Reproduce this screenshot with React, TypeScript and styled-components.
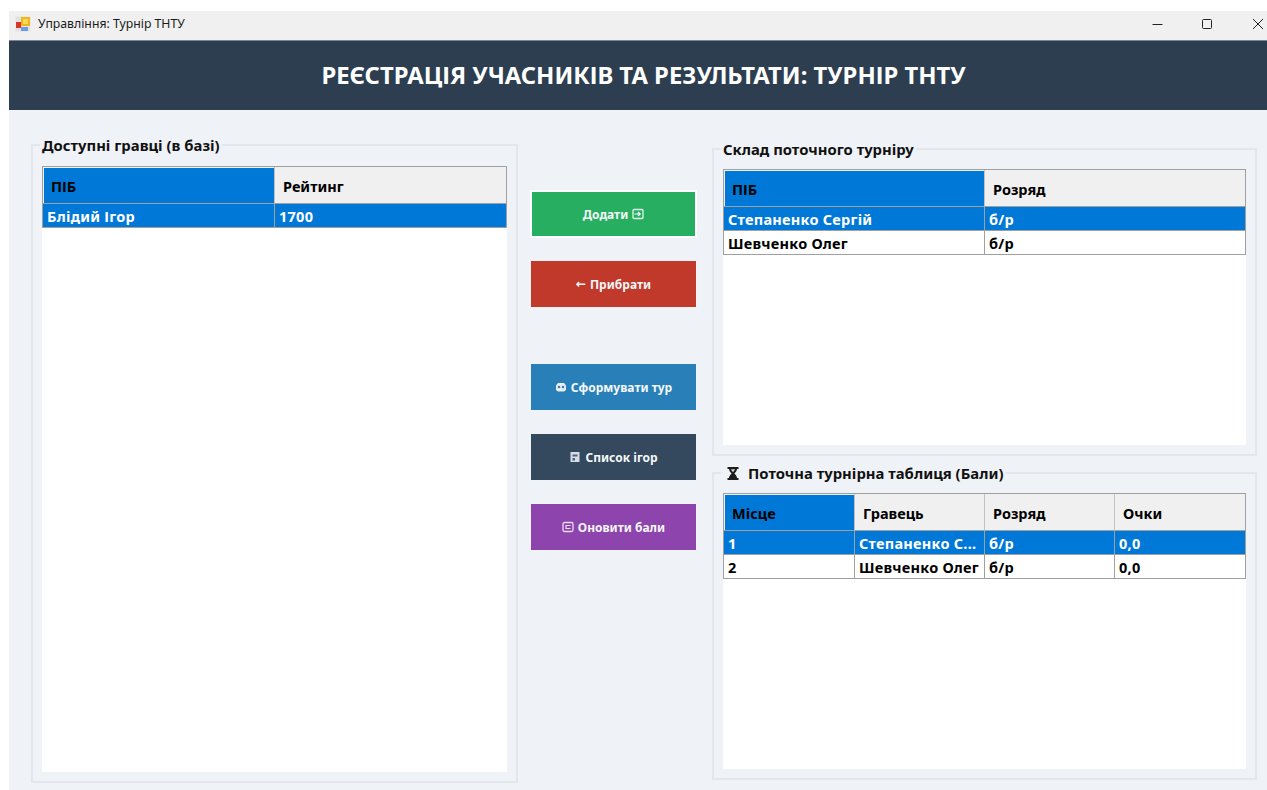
import styled, { createGlobalStyle } from 'styled-components';
import { ReactNode } from 'react';

const GlobalStyle = createGlobalStyle`
  html, body { margin: 0; padding: 0; background: #fff; overflow: hidden; }
  body { font-family: "Noto Sans", "Open Sans", sans-serif; }
`;

const Window = styled.div`
  width: 1258px;
  height: 779px;
  margin: 11px 0 0 9px;
  display: flex;
  flex-direction: column;
  background: #eff3f7;
`;

const TitleBar = styled.div`
  height: 29px;
  flex: none;
  box-sizing: content-box;
  display: flex;
  align-items: center;
  padding: 0 0 0 6px;
  background: #f0f0f0;
  color: #1a1a1a;
  font-size: 12.25px;
  border-bottom: 1px solid #7d8791;
`;

const TitleRow = styled.div`
  flex: 1;
  display: flex;
  align-items: center;
  margin-bottom: 4px;
`;

const TitleText = styled.span`
  margin-left: 7px;
  flex: 1;
`;

const WinControls = styled.div`
  display: flex;
  align-items: center;
  gap: 34px;
  margin-right: 1px;
`;

const Banner = styled.header`
  height: 69px;
  flex: none;
  box-sizing: border-box;
  padding: 0 0 2px 11px;
  display: flex;
  align-items: center;
  justify-content: center;
  background: #2c3e50;
  color: #fff;
  font-size: 23.8px;
  font-weight: 700;
`;

const Content = styled.main`
  flex: 1;
  min-height: 0;
  display: grid;
  grid-template-columns: 487px 165px 548px;
  column-gap: 13px;
  padding: 0 0 0 22px;
`;

const LeftColumn = styled.div`
  display: flex;
  padding: 25px 0 7px;
`;

const ActionColumn = styled.div`
  display: flex;
  flex-direction: column;
  padding-top: 81px;
`;

const RightColumn = styled.div`
  display: flex;
  flex-direction: column;
  gap: 7px;
  margin-left: 3px;
  padding: 29px 0 10px;
`;

const Group = styled.fieldset`
  flex: 1;
  min-width: 0;
  min-height: 0;
  margin: 0;
  padding: 0 9px 9px;
  border: 2px solid #e3e7eb;
  display: flex;
  background: transparent;
`;

const GroupTitle = styled.legend`
  margin-left: -2px;
  padding: 0 2px;
  display: flex;
  align-items: center;
  gap: 8px;
  font-size: 14.85px;
  font-weight: 700;
  line-height: 20px;
  color: #111;
`;

const ListArea = styled.div<{ $top?: number }>`
  flex: 1;
  background: #fff;
  margin-top: ${p => p.$top ?? 10}px;
`;

const Grid = styled.div<{ $columns: string }>`
  display: grid;
  grid-template-columns: ${p => p.$columns};
  border: 1px solid #a0a0a0;
  border-bottom: none;
  font-size: 14.5px;
  font-weight: 700;
`;

const HeadCell = styled.div<{ $active?: boolean; $last?: boolean }>`
  height: 37px;
  display: flex;
  align-items: center;
  padding: 2px 0 0 8px;
  box-sizing: border-box;
  border-right: ${p => (p.$last ? 'none' : '1px solid #c2c2c2')};
  border-bottom: 1px solid #a0a0a0;
  background: ${p => (p.$active ? '#0078d7' : '#f0f0f0')};
  color: #000;
  ${p => p.$active && 'box-shadow: inset 1px 1px 0 #f0f0f0;'}
`;

const Cell = styled.div<{ $selected?: boolean; $last?: boolean }>`
  height: 24px;
  display: flex;
  align-items: center;
  padding-left: 4px;
  box-sizing: border-box;
  letter-spacing: 0.25px;
  white-space: nowrap;
  overflow: hidden;
  border-right: ${p => (p.$last ? 'none' : '1px solid #a0a0a0')};
  border-bottom: 1px solid #a0a0a0;
  background: ${p => (p.$selected ? '#0078d7' : '#fff')};
  color: ${p => (p.$selected ? '#fff' : '#000')};
`;

const ActionButton = styled.button<{ $bg: string; $gap?: number; $outlined?: boolean }>`
  width: 165px;
  height: 46px;
  flex: none;
  margin-bottom: ${p => p.$gap ?? 24}px;
  display: flex;
  align-items: center;
  justify-content: center;
  gap: 4px;
  padding: 0;
  background: ${p => p.$bg};
  color: #f4f7f8;
  font-family: inherit;
  font-size: 12px;
  font-weight: 700;
  border: none;
  box-shadow: ${p => (p.$outlined ? '0 0 0 1px #fff, inset 0 0 0 1px #fff' : 'none')};
`;

const ArrowSign = styled.span`
  font-family: "DejaVu Sans", sans-serif;
  font-size: 12px;
`;

const HourglassMark = styled.svg`
  margin-left: 3px;
  flex: none;
`;

const Glyph = ({ children, size = 12 }: { children: ReactNode; size?: number }) => (
  <svg width={size} height={size} viewBox="0 0 12 12" fill="none">{children}</svg>
);

const AppIcon = () => (
  <svg width="16" height="16" viewBox="0 0 16 16">
    <rect x="0.5" y="0.5" width="15" height="15" fill="#e2e2e2" />
    <rect x="1" y="6" width="5" height="6" fill="#d8362c" />
    <rect x="6" y="1" width="9" height="9" fill="#efb81a" />
    <rect x="8" y="3" width="5" height="5" fill="#f8d75a" />
    <rect x="6" y="11" width="7" height="4" fill="#6d9be6" />
  </svg>
);

const Hourglass = () => (
  <HourglassMark width="14" height="15" viewBox="0 0 14 14">
    <path d="M1.500 0.500h11V2.500H11c0 2.400-2 3.300-2.600 4.500.6 1.200 2.600 2.100 2.600 4.500h1.500V13.500H1.500V11.500H3c0-2.400 2-3.300 2.600-4.500C5 5.800 3 4.900 3 2.500H1.500z" fill="#1c1c1c" />
    <path d="M5 2.800h4c-.2 1.200-1.300 1.900-2 2.900-.7-1-1.800-1.700-2-2.900z" fill="#cfcfcf" />
  </HourglassMark>
);

const playerColumns = '232px 1fr';
const rosterColumns = '261px 1fr';
const standingsColumns = '131px 130px 130px 1fr';

function DataGrid({ columns, heads, rows }: { columns: string; heads: string[]; rows: string[][] }) {
  const lastCol = heads.length - 1;
  return (
    <Grid $columns={columns}>
      {heads.map((h, i) => <HeadCell key={h} $active={i === 0} $last={i === lastCol}>{h}</HeadCell>)}
      {rows.map((row, r) => row.map((c, i) => (
        <Cell key={`${r}-${i}`} $selected={r === 0} $last={i === lastCol}>{c}</Cell>
      )))}
    </Grid>
  );
}

export default function App() {
  return (
    <>
      <GlobalStyle />
      <Window>
        <TitleBar>
          <TitleRow>
            <AppIcon />
            <TitleText>Управління: Турнір ТНТУ</TitleText>
            <WinControls>
              <svg width="16" height="12" viewBox="0 0 16 12"><path d="M2.500 6.500h10" stroke="#222" /></svg>
              <svg width="16" height="12" viewBox="0 0 16 12"><rect x="2.500" y="1.500" width="9" height="9" rx="1" fill="none" stroke="#222" /></svg>
              <svg width="16" height="12" viewBox="0 0 16 12"><path d="M3 1l10 10M13 1L3 11" stroke="#222" fill="none" /></svg>
            </WinControls>
          </TitleRow>
        </TitleBar>
        <Banner>РЕЄСТРАЦІЯ УЧАСНИКІВ ТА РЕЗУЛЬТАТИ: ТУРНІР ТНТУ</Banner>
        <Content>
          <LeftColumn>
            <Group>
              <GroupTitle>Доступні гравці (в базі)</GroupTitle>
              <ListArea $top={11}>
                <DataGrid columns={playerColumns} heads={['ПІБ', 'Рейтинг']} rows={[['Блідий Ігор', '1700']]} />
              </ListArea>
            </Group>
          </LeftColumn>
          <ActionColumn>
            <ActionButton $bg="#27ae60" $outlined>
              Додати
              <Glyph>
                <rect x="1" y="1.500" width="10" height="9" rx="1" stroke="#e4f4ea" strokeWidth="1.300" />
                <path d="M2.500 6h5.500M6 4l2.200 2L6 8" stroke="#fff" strokeWidth="1.200" />
              </Glyph>
            </ActionButton>
            <ActionButton $bg="#c0392b" $gap={57}><ArrowSign>←</ArrowSign>Прибрати</ActionButton>
            <ActionButton $bg="#2980b9">
              {/* game die */}
              <Glyph>
                <path d="M1 4.500 3 2h6l2 2.500V9l-2 1.500H3L1 9z" fill="#e8eef4" />
                <circle cx="4" cy="6" r="1.300" fill="#3f7fae" />
                <circle cx="8" cy="6" r="1.300" fill="#3f7fae" />
              </Glyph>
              Сформувати тур
            </ActionButton>
            <ActionButton $bg="#34495e">
              <Glyph>
                <rect x="1.500" y="1" width="9" height="10" fill="#d5dce6" />
                <path d="M3.500 3.500h5v2h-5zM3.500 7h2.500v2.500H3.500z" fill="#4b6286" />
              </Glyph>
              Список ігор
            </ActionButton>
            <ActionButton $bg="#8e44ad">
              <Glyph>
                <rect x="1" y="1.500" width="10" height="9" rx="1.500" stroke="#e8dcef" strokeWidth="1.300" />
                <path d="M8.500 4.500H4v3h4.500" stroke="#e8dcef" strokeWidth="1.200" />
              </Glyph>
              Оновити бали
            </ActionButton>
          </ActionColumn>
          <RightColumn>
            <Group>
              <GroupTitle>Склад поточного турніру</GroupTitle>
              <ListArea>
                <DataGrid
                  columns={rosterColumns}
                  heads={['ПІБ', 'Розряд']}
                  rows={[['Степаненко Сергій', 'б/р'], ['Шевченко Олег', 'б/р']]}
                />
              </ListArea>
            </Group>
            <Group>
              <GroupTitle><Hourglass />Поточна турнірна таблиця (Бали)</GroupTitle>
              <ListArea>
                <DataGrid
                  columns={standingsColumns}
                  heads={['Місце', 'Гравець', 'Розряд', 'Очки']}
                  rows={[['1', 'Степаненко С...', 'б/р', '0,0'], ['2', 'Шевченко Олег', 'б/р', '0,0']]}
                />
              </ListArea>
            </Group>
          </RightColumn>
        </Content>
      </Window>
    </>
  );
}
